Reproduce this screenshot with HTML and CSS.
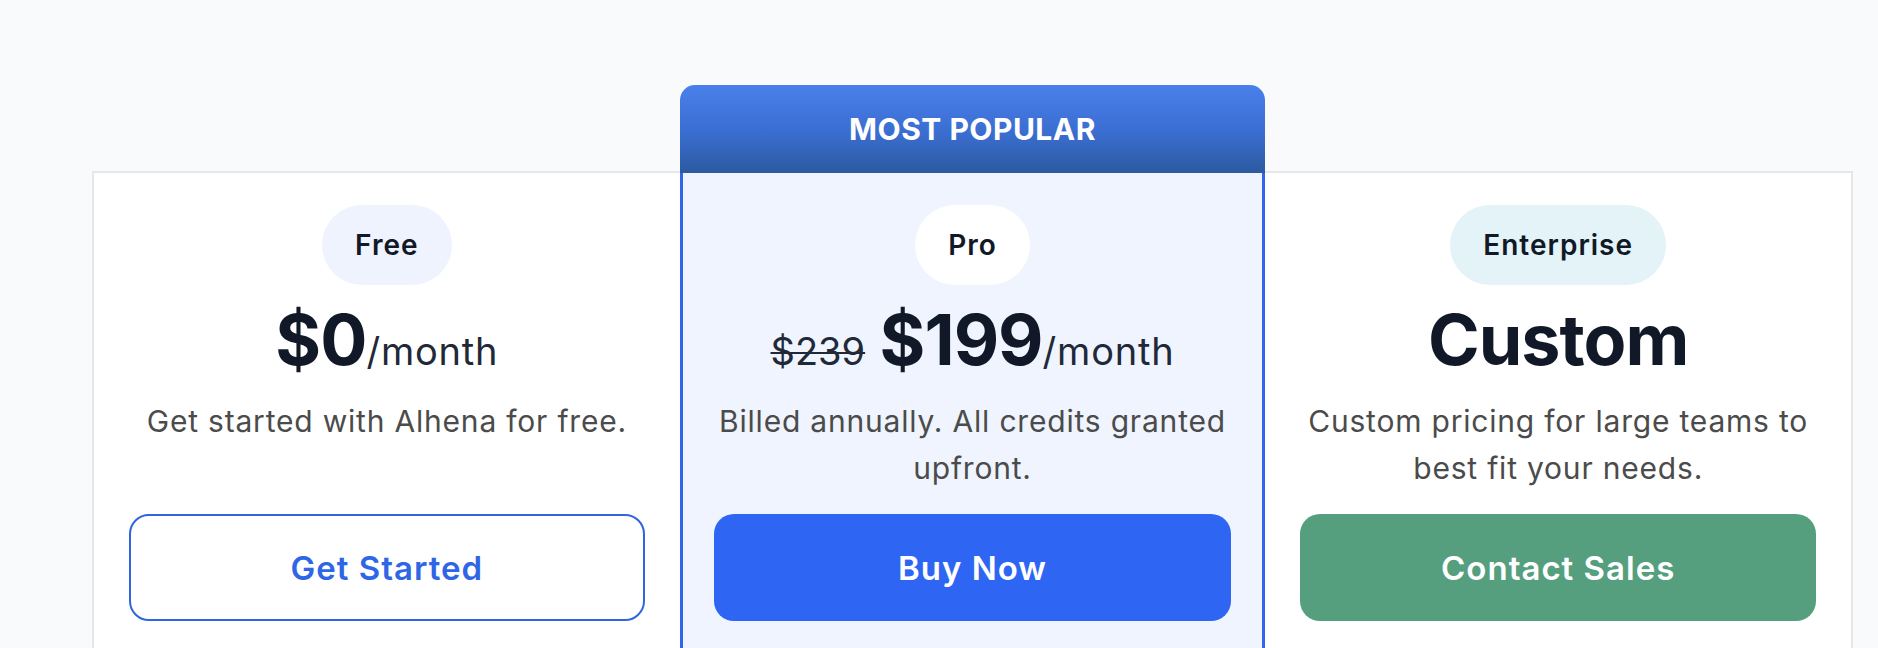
FILE: index.html
```html
<!DOCTYPE html>
<html lang="en">
<head>
    <meta charset="UTF-8">
    <meta name="viewport" content="width=device-width, initial-scale=1.0">
    <title>Pricing</title>
    <link rel="stylesheet" href="styles.css">
</head>
<body>
    <section class="pricing">
        <div class="plans">
            <!-- Free -->
            <div class="plan">
                <div class="plan-body">
                    <span class="pill pill-free">Free</span>
                    <div class="price"><span class="amount">$0</span><span class="per">/month</span></div>
                    <p class="desc">Get started with Alhena for free.</p>
                    <a href="#" class="btn btn-outline">Get Started</a>
                </div>
            </div>

            <!-- Pro -->
            <div class="plan plan-popular">
                <div class="popular-label">MOST POPULAR</div>
                <div class="plan-body">
                    <span class="pill pill-pro">Pro</span>
                    <div class="price"><span class="old">$239</span> <span class="amount">$199</span><span class="per">/month</span></div>
                    <p class="desc">Billed annually. All credits granted upfront.</p>
                    <a href="#" class="btn btn-primary">Buy Now</a>
                </div>
            </div>

            <!-- Enterprise -->
            <div class="plan">
                <div class="plan-body">
                    <span class="pill pill-enterprise">Enterprise</span>
                    <div class="price"><span class="amount">Custom</span></div>
                    <p class="desc">Custom pricing for large teams to best fit your needs.</p>
                    <a href="#" class="btn btn-green">Contact Sales</a>
                </div>
            </div>
        </div>
    </section>
</body>
</html>
```

FILE: styles.css
```css
body {
    margin: 0;
    padding: 0;
    background: #f8fafc;
    font-family: Inter, "Noto Sans", sans-serif;
    color: #111827;
}
.pricing {
    padding: 171px 25px 0 92px;
}
.plans {
    display: grid;
    grid-template-columns: 1fr 1fr 1fr;
    background: #fff;
    border: 2px solid #e5e7eb;
    border-bottom: none;
    min-height: 500px;
}
.plan {
    display: flex;
    flex-direction: column;
}
.plan-body {
    display: flex;
    flex-direction: column;
    align-items: center;
    padding: 32px 35px 40px;
    flex: 1;
}
.plan-popular {
    margin-top: -88px;
}
.plan-popular .plan-body {
    background: #eff4fe;
    border-left: 3px solid #2f66ef;
    border-right: 3px solid #2f66ef;
    padding: 32px 31px 40px;
}
.popular-label {
    height: 88px;
    display: flex;
    align-items: center;
    justify-content: center;
    background: linear-gradient(180deg, #4a80ec 0%, #3a6dd0 55%, #2c599f 100%);
    border-radius: 15px 15px 0 0;
    color: #fff;
    font-size: 30px;
    font-weight: 700;
    letter-spacing: 0.5px;
}
.pill {
    display: inline-flex;
    align-items: center;
    height: 80px;
    padding: 0 33px;
    border-radius: 40px;
    font-size: 28px;
    font-weight: 600;
    letter-spacing: 1px;
    box-sizing: border-box;
}
.pill-free {
    background: #eef3fd;
}
.pill-pro {
    background: #fff;
}
.pill-enterprise {
    background: #e3f3f8;
}
.price {
    margin-top: 19px;
    line-height: 72px;
    height: 72px;
    white-space: nowrap;
}
.amount {
    font-size: 70px;
    font-weight: 700;
    letter-spacing: -1px;
}
.per {
    font-size: 38px;
    font-weight: 400;
    letter-spacing: 0.8px;
    color: #1f2937;
}
.old {
    font-size: 38px;
    font-weight: 400;
    color: #1f2937;
    text-decoration: line-through;
    text-decoration-thickness: 2px;
    margin-right: 10px;
}
.desc {
    margin: 22px 0 0;
    min-height: 94px;
    font-size: 30px;
    line-height: 47px;
    letter-spacing: 0.8px;
    color: #4b4b4b;
    text-align: center;
}
.btn {
    display: flex;
    align-items: center;
    justify-content: center;
    width: 100%;
    height: 107px;
    margin-top: 22px;
    box-sizing: border-box;
    border-radius: 20px;
    font-size: 33px;
    font-weight: 600;
    letter-spacing: 1px;
    text-decoration: none;
}
.btn-outline {
    border: 2px solid #2f66e0;
    color: #2f66e6;
    background: #fff;
}
.btn-primary {
    background: #2e65f3;
    color: #fff;
}
.btn-green {
    background: #559f7f;
    color: #fff;
}
```
